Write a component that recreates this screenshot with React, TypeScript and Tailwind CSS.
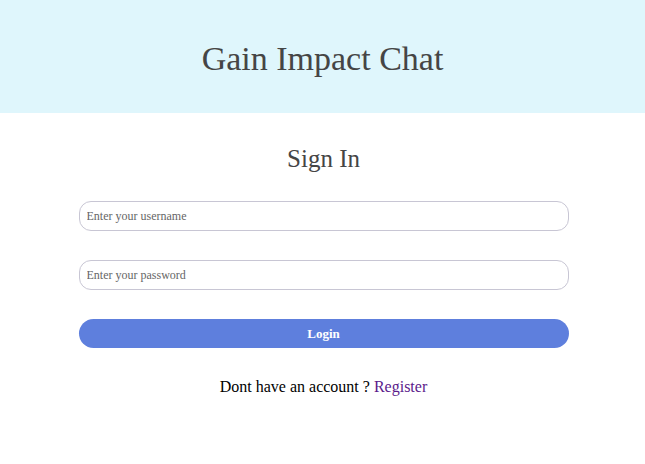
import { useState } from 'react';

const serif = { fontFamily: '"Liberation Serif", "DejaVu Serif", serif' };

export default function App() {
    const [username, setUsername] = useState('');
    const [password, setPassword] = useState('');

    return (
        <div className="min-h-screen bg-white" style={serif}>
            <header className="flex h-[113px] items-center justify-center bg-[#dff6fc] pt-[3px]">
                <h1 className="text-[34px] text-[#454545]">Gain Impact Chat</h1>
            </header>

            <main className="mx-auto w-[490px] translate-x-[1px] pt-[31px]">
                <h2 className="text-center text-[25px] leading-[30px] text-[#454545]">Sign In</h2>

                <form className="mt-[27px] flex flex-col" onSubmit={e => e.preventDefault()}>
                    <input
                        value={username}
                        onChange={e => setUsername(e.target.value)}
                        placeholder="Enter your username"
                        className="h-[30px] w-full rounded-[12px] border border-[#c8c6d4] px-[7px] text-[12px] text-[#333] outline-none placeholder:text-[#666]"
                    />
                    <input
                        type="password"
                        value={password}
                        onChange={e => setPassword(e.target.value)}
                        placeholder="Enter your password"
                        className="mt-[29px] h-[30px] w-full rounded-[12px] border border-[#c8c6d4] px-[7px] text-[12px] text-[#333] outline-none placeholder:text-[#666]"
                    />
                    <button
                        type="submit"
                        className="mt-[29px] h-[29px] w-full rounded-full bg-[#5e7fdd] text-[13px] font-bold text-white"
                    >
                        Login
                    </button>
                </form>

                <p className="mt-[27px] text-center text-[16px] text-black">
                    Dont have an account ? <a href="#" className="text-[#5b1a8b]">Register</a>
                </p>
            </main>
        </div>
    );
}
